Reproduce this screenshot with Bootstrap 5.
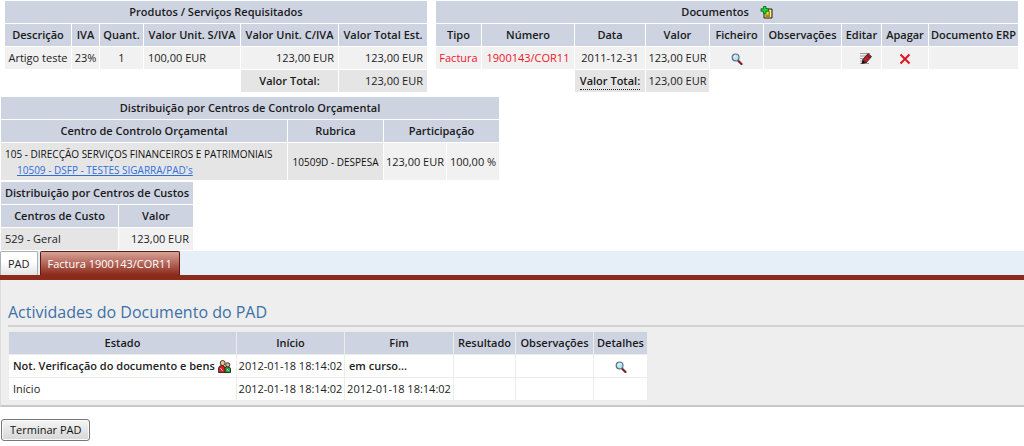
<!DOCTYPE html>
<html lang="pt">
<head>
<meta charset="utf-8">
<meta name="viewport" content="width=device-width, initial-scale=1">
<title>PAD - Factura 1900143/COR11</title>
<link href="https://cdn.jsdelivr.net/npm/bootstrap@5.3.0/dist/css/bootstrap.min.css" rel="stylesheet">
<style>
body{font:11px/14px "Open Sans",sans-serif;color:#222}
.grid{width:auto;margin:0;table-layout:fixed;border-collapse:separate;border-spacing:1px;line-height:14px;white-space:nowrap}
.grid th,.grid td{height:22px;padding:0 4px;vertical-align:middle}
.grid th{background:#cdd3e1;text-align:center;font-weight:600;color:#1a1a1a;padding:0}
.grid td{background:#f1f1f1}
.grid td.tone,.grid th.tone{background:#e5e5e5}
.grid .void{background:none}
.grid svg{display:inline-block;vertical-align:middle}
.grid button{border:0;background:none;padding:0;line-height:1}
.grid td.red{color:#f01428}
.grid abbr{text-decoration:none;border-bottom:1px dotted #222;cursor:help;padding-bottom:1px}
.grid a.sub{color:#2f6fdc;margin-left:12px}
.grid .tall{height:37px}
.produtos{width:424px}
.produtos col:nth-child(1){width:66px}.produtos col:nth-child(2){width:27px}.produtos col:nth-child(3){width:43px}.produtos col:nth-child(4){width:96px}.produtos col:nth-child(5){width:97px}
.docs{width:584px}
.docs col:nth-child(1){width:45px}.docs col:nth-child(2){width:92px}.docs col:nth-child(3){width:70px}.docs col:nth-child(4){width:63px}.docs col:nth-child(5){width:53px}.docs col:nth-child(6){width:77px}.docs col:nth-child(7){width:39px}.docs col:nth-child(8){width:46px}
.orc{width:500px}
.orc col:nth-child(1){width:286px}.orc col:nth-child(2){width:95px}.orc col:nth-child(3){width:62px}
.orc td.tone{font-size:10px;line-height:16px;color:#111}
.custos{width:194px}
.custos col:nth-child(1){width:117px}
.ativ{width:640px;background:#ececec}
.ativ col:nth-child(1){width:227px}.ativ col:nth-child(2){width:107px}.ativ col:nth-child(3){width:108px}.ativ col:nth-child(4){width:61px}.ativ col:nth-child(5){width:77px}
.ativ td{background:#fff}
.tabstrip{background:#e6eff7;border-bottom:5px solid #8c2a1c}
.tabstrip .nav-link{padding:0 7px;line-height:23px;font-size:11px;color:#222;border:1px solid #aab0b6;border-bottom:0;border-radius:2px 2px 0 0;background:linear-gradient(#fff 40%,#e4e4e4)}
.tabstrip .nav-link.active{color:#fff;border-color:#5c1c12;background:linear-gradient(#d9a297,#8c2a1c)}
.panel{background:#eee;border-left:1px solid #ddd;border-bottom:2px solid #c8c8c8;padding:20px 0 4px 7px}
.panel h2{font-size:16px;line-height:25px;font-weight:400;color:#3c71a8;border-bottom:2px solid #d2d2d2;margin-bottom:4px}
.finish{font-size:11px;line-height:18px;padding:1px 8px;color:#111;border:1px solid #777;border-radius:3px;background:linear-gradient(#f5f5f5,#d6d6d6);box-shadow:inset 0 0 0 1px #fafafa}
.gap-tabs{gap:2px}
.gap-tables{gap:0 7px;margin-bottom:3px}
.gap-finish{margin:12px 0 0 1px}
</style>
</head>
<body>
<svg width="0" height="0" class="position-absolute" aria-hidden="true">
<symbol id="lens" viewBox="0 0 12 12"><path d="M7 7.5 10.5 11" stroke="#7d2020" stroke-width="2.2" stroke-linecap="round"/><circle cx="4.6" cy="4.4" r="3.4" fill="#b9e6f5" stroke="#5a7286" stroke-width="1.2"/><path d="M3 4.300Q3.200 2.900 4.800 2.800" stroke="#fff" fill="none"/></symbol>
</svg>
<main>
<div class="d-flex flex-wrap align-items-start ps-1 gap-tables">
<table class="grid produtos">
<colgroup><col><col><col><col><col><col></colgroup>
<tr><th colspan="6">Produtos / Serviços Requisitados</th></tr>
<tr><th>Descrição</th><th>IVA</th><th>Quant.</th><th>Valor Unit. S/IVA</th><th>Valor Unit. C/IVA</th><th>Valor Total Est.</th></tr>
<tr><td class="px-0 text-center">Artigo teste</td><td class="px-0 text-center">23%</td><td class="text-center">1</td><td>100,00 EUR</td><td class="text-end">123,00 EUR</td><td class="text-end">123,00 EUR</td></tr>
<tr><td class="void" colspan="4"></td><th class="tone">Valor Total:</th><td class="tone text-end">123,00 EUR</td></tr>
</table>
<table class="grid docs">
<colgroup><col><col><col><col><col><col><col><col><col></colgroup>
<tr><th colspan="9">Documentos
<button type="button" class="ms-2" aria-label="Adicionar documento"><svg width="13" height="13" viewBox="0 0 13 13"><path d="M4 3h8v9H4z" fill="#e9d44a" stroke="#222"/><path d="M8.500 5h1.500v6H5.500V8.500h3z" fill="#a88a1c"/><path d="M10.500 4v7" stroke="#fff6a0"/><path d="M3.500.5h2.500v2.200h2.500v2.600H6v2.400H3.500V5.300H1V2.700h2.500z" fill="#19d43a" stroke="#08671a" stroke-width=".8"/></svg></button></th></tr>
<tr><th>Tipo</th><th>Número</th><th>Data</th><th>Valor</th><th>Ficheiro</th><th>Observações</th><th>Editar</th><th>Apagar</th><th>Documento ERP</th></tr>
<tr><td class="red text-center px-0">Factura</td><td class="red text-center">1900143/COR11</td><td class="text-center">2011-12-31</td><td class="text-center px-0">123,00 EUR</td>
<td class="text-center"><button type="button" aria-label="Ver ficheiro"><svg width="12" height="12"><use href="#lens"/></svg></button></td><td></td>
<td class="text-center"><button type="button" class="ms-2" aria-label="Editar"><svg width="13" height="13" viewBox="0 0 13 13"><path d="M1 1.500h10M1 4h6M1 6.500h4M1 9h3M1 11.500h9" stroke="#999"/><path d="M2.500 12 3.500 7.500l3.500 3.500z" fill="#111"/><path d="M3.800 7.500 9 1.500 12.500 4.500 7 11z" fill="#b3202a" stroke="#3a1010" stroke-width=".8"/><path d="m8 3 3.300 3" stroke="#333"/></svg></button></td>
<td class="text-center"><button type="button" aria-label="Apagar"><svg width="12" height="12" viewBox="0 0 12 12"><path d="m1.500 1.500 9 9m0-9-9 9" stroke="#e0141c" stroke-width="2"/></svg></button></td><td></td></tr>
<tr><td class="void" colspan="2"></td><th class="tone"><abbr>Valor Total:</abbr></th><td class="tone text-center px-0">123,00 EUR</td><td class="void" colspan="5"></td></tr>
</table>
</div>
<table class="grid orc">
<colgroup><col><col><col><col></colgroup>
<tr><th colspan="4">Distribuição por Centros de Controlo Orçamental</th></tr>
<tr><th>Centro de Controlo Orçamental</th><th>Rubrica</th><th colspan="2">Participação</th></tr>
<tr><td class="tone tall">105 - DIRECÇÃO SERVIÇOS FINANCEIROS E PATRIMONIAIS<br><a class="sub" href="#">10509 - DSFP - TESTES SIGARRA/PAD's</a></td><td class="tone text-center px-0">10509D - DESPESA</td><td class="text-center px-0">123,00 EUR</td><td class="text-center px-0">100,00 %</td></tr>
</table>
<table class="grid custos">
<colgroup><col><col></colgroup>
<tr><th colspan="2">Distribuição por Centros de Custos</th></tr>
<tr><th>Centros de Custo</th><th>Valor</th></tr>
<tr><td class="tone">529 - Geral</td><td class="text-end">123,00 EUR</td></tr>
</table>
<nav class="nav tabstrip gap-tabs" aria-label="Documentos do PAD">
<a class="nav-link" href="#">PAD</a>
<a class="nav-link active" href="#" aria-current="page">Factura 1900143/COR11</a>
</nav>
<section class="panel">
<h2>Actividades do Documento do PAD</h2>
<table class="grid ativ">
<colgroup><col><col><col><col><col><col></colgroup>
<tr><th>Estado</th><th>Início</th><th>Fim</th><th>Resultado</th><th>Observações</th><th>Detalhes</th></tr>
<tr><td class="fw-semibold pe-0">Not. Verificação do documento e bens
<svg width="13" height="13" viewBox="0 0 13 13" role="img" aria-label="Utilizadores"><path d="M6.500 12.500V8.500q.3-2 2.800-2t3.200 2v4z" fill="#24a148" stroke="#111" stroke-width=".8"/><path d="M.6 12.500V8q.3-2.500 3.200-2.500T7 8v4.500z" fill="#d8202c" stroke="#111" stroke-width=".8"/><circle cx="9.700" cy="4.800" r="2.100" fill="#f4b183" stroke="#111" stroke-width=".8"/><circle cx="4.700" cy="3" r="2.500" fill="#f4c08a" stroke="#111" stroke-width=".8"/><path d="m2.500 8 2 3M9 9l1.500 2" stroke="#fff" stroke-width=".7"/></svg></td><td class="px-0 text-center">2012-01-18 18:14:02</td><td class="fw-semibold">em curso...</td><td></td><td></td><td class="text-center"><button type="button" aria-label="Ver detalhes"><svg width="12" height="12"><use href="#lens"/></svg></button></td></tr>
<tr><td>Início</td><td class="px-0 text-center">2012-01-18 18:14:02</td><td class="px-0 text-center">2012-01-18 18:14:02</td><td></td><td></td><td></td></tr>
</table>
</section>
<button type="button" class="finish gap-finish">Terminar PAD</button>
</main>
</body>
</html>
